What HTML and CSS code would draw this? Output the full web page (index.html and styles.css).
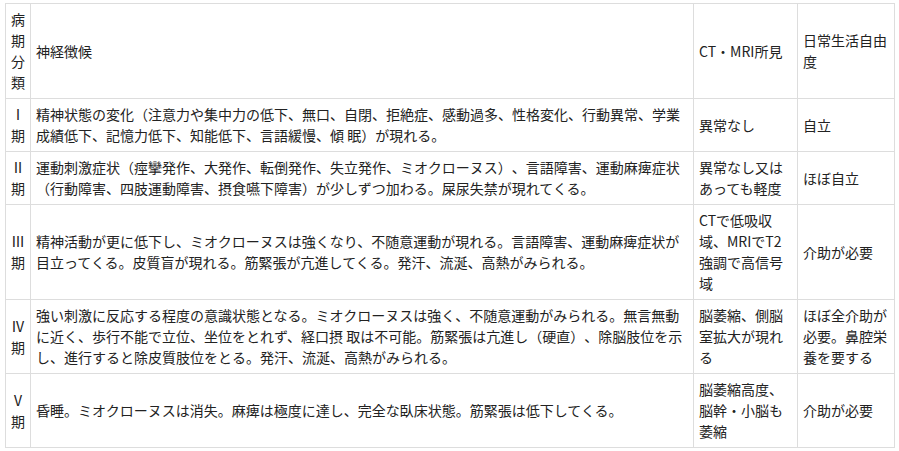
FILE: index.html
```html
<!DOCTYPE html>
<html lang="ja">
<head>
<meta charset="utf-8">
<title>病期分類</title>
<link rel="stylesheet" href="styles.css">
</head>
<body>
<table class="stage-table">
  <colgroup>
    <col class="c-stage">
    <col class="c-sign">
    <col class="c-ct">
    <col class="c-life">
  </colgroup>
  <tr>
    <td class="stage">病期分類</td>
    <td>神経徴候</td>
    <td>CT・MRI所見</td>
    <td>日常生活自由度</td>
  </tr>
  <tr>
    <td class="stage"><span class="rn">Ⅰ</span>期</td>
    <td>精神状態の変化（注意力や集中力の低下、無口、自閉、拒絶症、感動過多、性格変化、行動異常、学業成績低下、記憶力低下、知能低下、言語緩慢、傾 眠）が現れる。</td>
    <td>異常なし</td>
    <td>自立</td>
  </tr>
  <tr>
    <td class="stage"><span class="rn">Ⅱ</span>期</td>
    <td>運動刺激症状（痙攣発作、大発作、転倒発作、失立発作、ミオクローヌス）、言語障害、運動麻痺症状（行動障害、四肢運動障害、摂食嚥下障害）が少しずつ加わる。屎尿失禁が現れてくる。</td>
    <td>異常なし又はあっても軽度</td>
    <td>ほぼ自立</td>
  </tr>
  <tr>
    <td class="stage"><span class="rn">Ⅲ</span>期</td>
    <td>精神活動が更に低下し、ミオクローヌスは強くなり、不随意運動が現れる。言語障害、運動麻痺症状が目立ってくる。皮質盲が現れる。筋緊張が亢進してくる。発汗、流涎、高熱がみられる。</td>
    <td>CTで低吸収域、MRIでT2強調で高信号域</td>
    <td>介助が必要</td>
  </tr>
  <tr>
    <td class="stage"><span class="rn">Ⅳ</span>期</td>
    <td>強い刺激に反応する程度の意識状態となる。ミオクローヌスは強く、不随意運動がみられる。無言無動に近く、歩行不能で立位、坐位をとれず、経口摂 取は不可能。筋緊張は亢進し（硬直）、除脳肢位を示し、進行すると除皮質肢位をとる。発汗、流涎、高熱がみられる。</td>
    <td>脳萎縮、側脳室拡大が現れる</td>
    <td>ほぼ全介助が必要。鼻腔栄養を要する</td>
  </tr>
  <tr>
    <td class="stage"><span class="rn">Ⅴ</span>期</td>
    <td>昏睡。ミオクローヌスは消失。麻痺は極度に達し、完全な臥床状態。筋緊張は低下してくる。</td>
    <td>脳萎縮高度、脳幹・小脳も萎縮</td>
    <td>介助が必要</td>
  </tr>
</table>
</body>
</html>
```
FILE: styles.css
```css
html, body {
  margin: 0;
  padding: 0;
  background: #fff;
}
body {
  padding: 3px 5px;
  font-family: "Noto Sans CJK JP", "Noto Sans", sans-serif;
  font-size: 14px;
  line-height: 21px;
  color: #222;
  text-spacing-trim: space-all;
}
.stage-table {
  border-collapse: collapse;
  table-layout: fixed;
  width: 889px;
}
.c-stage { width: 25px; }
.c-sign { width: 663px; }
.c-ct { width: 104px; }
.c-life { width: 97px; }
.stage-table td {
  border: 1px solid #dddddd;
  padding: 5px 5px;
  vertical-align: middle;
  word-break: normal;
  line-break: strict;
}
.stage-table td.stage {
  text-align: center;
  padding-left: 4px;
  padding-right: 4px;
}
.rn {
  display: block;
}
```
